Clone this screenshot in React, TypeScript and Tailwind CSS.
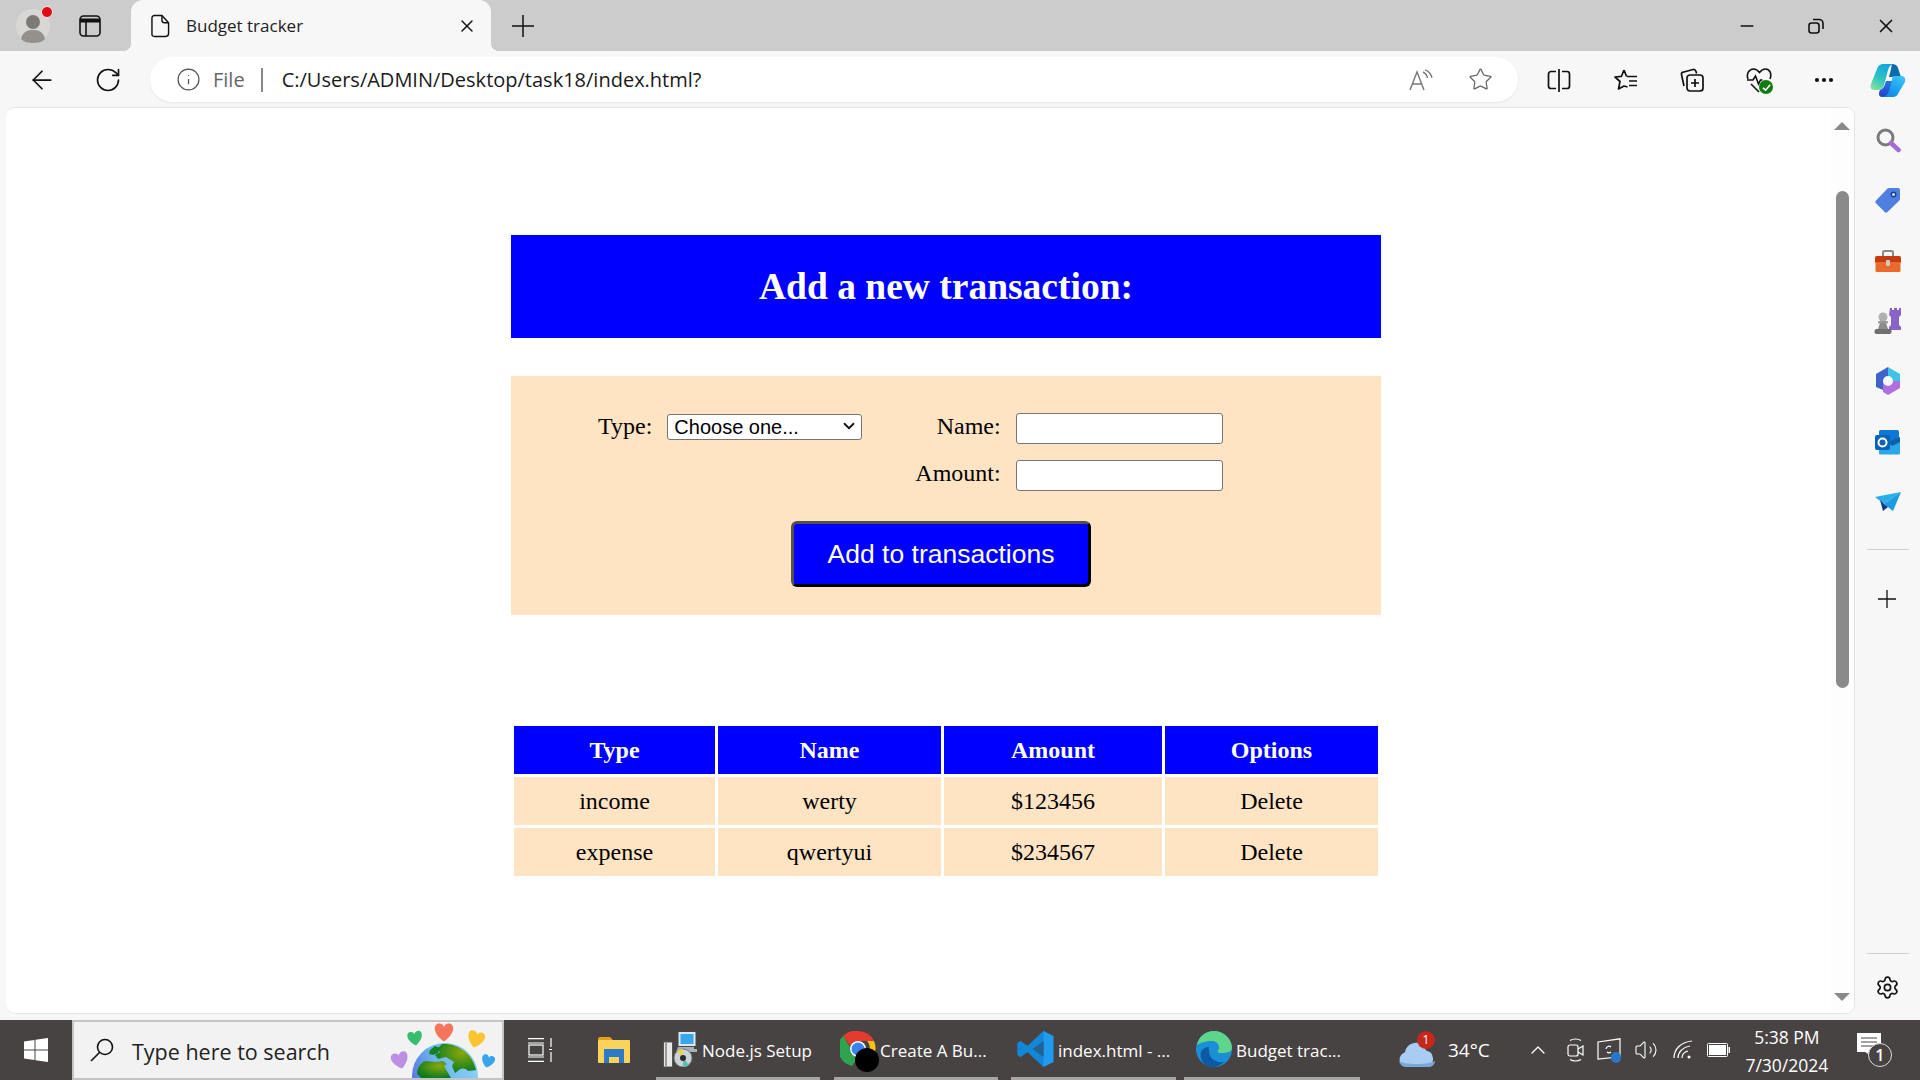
import React from "react";
import { ArrowLeft, RotateCw, Info, Star, X, Minus, Settings, Ellipsis, ChevronUp, ChevronDown, Volume2 } from "lucide-react";

const ui = "font-['Open_Sans',sans-serif]";
const serif = "font-['Liberation_Serif',serif]";
const arial = "font-['Liberation_Sans',sans-serif]";

function Profile() {
  return (
    <div className="relative w-[34px] h-[34px] ml-[16px] rounded-full bg-[#d8d6d2]">
      <svg viewBox="0 0 34 34" className="w-[34px] h-[34px]">
        <circle cx="17" cy="17" r="17" fill="#d9d7d3" />
        <circle cx="17" cy="13" r="7" fill="#7d7a76" />
        <path d="M5 30c2-8 7-9 12-9s10 1 12 9c-3 3-7 4-12 4s-9-1-12-4z" fill="#94918d" />
      </svg>
      <span className="absolute right-[-3px] top-[-3px] w-[12px] h-[12px] rounded-full bg-[#e30613] border border-[#eeeeee]" />
    </div>
  );
}

function TabsIcon() {
  return (
    <svg viewBox="0 0 22 22" className="w-[22px] h-[22px] ml-[29px]" fill="none" stroke="#111" strokeWidth="1.6">
      <rect x="1" y="1" width="20" height="20" rx="3.5" />
      <path d="M1 5.5h20" strokeWidth="4" />
      <path d="M7 6v15" />
    </svg>
  );
}

function DocIcon() {
  return (
    <svg viewBox="0 0 20 24" className="w-[19px] h-[24px]" fill="none" stroke="#111" strokeWidth="1.5">
      <path d="M3.5 1h8l7 7.5V20a3 3 0 0 1-3 3h-12a2.500 2.500 0 0 1-2.500-3V3.500A2.500 2.500 0 0 1 3.500 1z" />
      <path d="M11.500 1v5a2.500 2.500 0 0 0 2.500 2.500h4.500" />
    </svg>
  );
}

function ReadAloud() {
  return (
    <svg viewBox="0 0 24 22" className="w-[24px] h-[22px]" fill="none" stroke="#777" strokeWidth="1.4">
      <path d="M1 21 8 3l7 18M3.500 15h9" />
      <path d="M14 3c2 1 4 3 4.500 6M16 0.800c3 1 6 4 7 8" />
    </svg>
  );
}

function SplitIcon() {
  return (
    <svg viewBox="0 0 24 24" className="w-[24px] h-[24px]" fill="none" stroke="#111" strokeWidth="1.7">
      <path d="M9 3.500H4a2.500 2.500 0 0 0-2.500 2.500v12A2.500 2.500 0 0 0 4 20.500h5M15 3.500h5A2.500 2.500 0 0 1 22.500 6v12a2.500 2.500 0 0 1-2.500 2.500h-5" />
      <path d="M12 1v23" />
    </svg>
  );
}

function FavIcon() {
  return (
    <svg viewBox="0 0 24 24" className="w-[24px] h-[24px]" fill="none" stroke="#111" strokeWidth="1.7">
      <path d="M10 2l2.600 6.500M10 2 7.500 8.300 1 9l5 4.500L4.500 21l5.500-3 3.500 1" strokeLinejoin="round" />
      <path d="M13 8.500h10M15 13h8M15 17.500h8" />
    </svg>
  );
}

function CollectionsIcon() {
  return (
    <svg viewBox="0 0 24 24" className="w-[24px] h-[24px]" fill="none" stroke="#111" strokeWidth="1.7">
      <path d="M4 18 1.500 6.500a2 2 0 0 1 1.500-2.300L13 1.500c1.500-.3 2.500.5 3 2l.6 2" />
      <rect x="7" y="7" width="16" height="16" rx="3" />
      <path d="M15 11v8M11 15h8" />
    </svg>
  );
}

function HealthIcon() {
  return (
    <div className="relative w-[27px] h-[26px]">
      <svg viewBox="0 0 27 26" className="w-[27px] h-[26px]" fill="none" stroke="#111" strokeWidth="1.6">
        <path d="M2 12C0 7 3 2 7.500 2c2.500 0 4.500 1.500 6 3.500C15 3.500 17 2 19.500 2 24 2 26 7 24 12" />
        <path d="M1 13h6l2.500-4 3 8 2-4h2M5 17l8 8" />
      </svg>
      <span className="absolute right-0 bottom-[-1px] w-[14px] h-[14px] rounded-full bg-[#107c10] flex items-center justify-center">
        <svg viewBox="0 0 10 10" className="w-[9px] h-[9px]" fill="none" stroke="#fff" strokeWidth="1.8"><path d="M1 5.500 4 8l5-6" /></svg>
      </span>
    </div>
  );
}

function Copilot() {
  return (
    <svg viewBox="0 0 36 35" className="w-[36px] h-[35px]">
      <defs>
        <linearGradient id="cpA" x1="0.700" y1="0" x2="0.200" y2="1"><stop offset="0" stopColor="#0fa5e0" /><stop offset="0.550" stopColor="#2cc3c0" /><stop offset="1" stopColor="#7fe39a" /></linearGradient>
        <linearGradient id="cpB" x1="0.900" y1="0" x2="0.200" y2="1"><stop offset="0" stopColor="#38c6f7" /><stop offset="1" stopColor="#0d86e6" /></linearGradient>
        <linearGradient id="cpC" x1="0.500" y1="0" x2="0.500" y2="1"><stop offset="0" stopColor="#1f7ae0" /><stop offset="1" stopColor="#2c3fc8" /></linearGradient>
      </defs>
      <path d="M22 1c3 0 5 1 6 4l3 9h-9l-3 0 2-8c.4-2 .6-4 1-5z" fill="#0b6aa8" />
      <path d="M14 1h9c-3 1-4 3-5 6l-4 15c-1 3-3 5-7 5H4c-3 0-4-3-3-6L7 6c1-3 3-5 7-5z" fill="url(#cpA)" />
      <path d="M10 27c3-1 4-3 5-6l1-3h7l-4 16h-7c-3 0-4-3-2-7z" fill="url(#cpC)" />
      <path d="M22 34h-9c3-1 5-3 6-6l4-15h8c3 0 5 2 4 6l-6 10c-1 3-3 5-7 5z" fill="url(#cpB)" />
    </svg>
  );
}

function SideSlot({ children }: { children: React.ReactNode }) {
  return <div className="h-[60.300px] flex items-center justify-center shrink-0">{children}</div>;
}

function Sidebar() {
  return (
    <div className="w-[65px] flex flex-col items-center pt-[3px] pb-[3px] shrink-0">
      <SideSlot>
        <svg viewBox="0 0 26 26" className="w-[26px] h-[26px]" fill="none">
          <circle cx="10.500" cy="10.500" r="7.500" stroke="#7a7a7a" strokeWidth="3" />
          <path d="M16 16l7.500 7" stroke="#a66bd4" strokeWidth="4.500" strokeLinecap="round" />
        </svg>
      </SideSlot>
      <SideSlot>
        <svg viewBox="0 0 26 26" className="w-[26px] h-[26px]">
          <path d="M14 1h9a2 2 0 0 1 2 2v9a2 2 0 0 1-.6 1.500L12.500 25a2 2 0 0 1-2.800 0L1 16.300a2 2 0 0 1 0-2.800L12.500 1.600A2 2 0 0 1 14 1z" fill="#4f80e1" />
          <circle cx="18.500" cy="7.500" r="3" fill="#1e3f8f" />
          <circle cx="18.500" cy="7.500" r="1.500" fill="#cfe0ff" />
        </svg>
      </SideSlot>
      <SideSlot>
        <svg viewBox="0 0 28 24" className="w-[28px] h-[24px]">
          <path d="M9 7V3.500A1.500 1.500 0 0 1 10.500 2h7A1.500 1.500 0 0 1 19 3.500V7" fill="none" stroke="#8a8a8a" strokeWidth="2" />
          <rect x="1" y="7" width="26" height="7" rx="1.500" fill="#c83b0e" />
          <rect x="1.500" y="13" width="25" height="10" rx="1.500" fill="#ea6a2c" />
          <rect x="12" y="11" width="4" height="6" rx="1" fill="#c9c9c9" />
        </svg>
      </SideSlot>
      <SideSlot>
        <svg viewBox="0 0 28 28" className="w-[28px] h-[28px]">
          <path d="M16 1h2v2h2V1h3v2h2V1h2v7l-2 2v8l2 2v3H15v-3l2-2v-8l-2-2z" fill="#8a63c9" />
          <circle cx="9" cy="10" r="4.500" fill="#b0b0b0" />
          <rect x="4" y="14" width="10" height="2.500" rx="1" fill="#9a9a9a" />
          <path d="M6 16h6l2 6H4z" fill="#8c8c8c" />
          <rect x="0.500" y="22" width="17" height="5" rx="2" fill="#6f6f6f" />
        </svg>
      </SideSlot>
      <SideSlot>
        <svg viewBox="0 0 26 28" className="w-[26px] h-[28px]">
          <path d="M13 0 25 7v7h-7a5 5 0 0 0-5-5z" fill="#3fc4e8" />
          <path d="M1 7 13 0v9a5 5 0 0 0-5 5v9l-7-3z" fill="#3f63c9" />
          <path d="M8 14a5 5 0 0 0 5 5 5 5 0 0 0 5-5h7v7l-12 7-5-3z" fill="#b06fe0" />
        </svg>
      </SideSlot>
      <SideSlot>
        <svg viewBox="0 0 26 26" className="w-[26px] h-[26px]">
          <rect x="4" y="1" width="20" height="12" rx="1.500" fill="#0f78d4" />
          <path d="M4 12h21v12a1.500 1.500 0 0 1-1.500 1.500h-18A1.500 1.500 0 0 1 4 24z" fill="#2aa7e8" />
          <path d="M13 13 25 8v5l-8 4z" fill="#0f5fa8" />
          <rect x="0" y="6" width="15" height="15" rx="2" fill="#0a62b8" />
          <circle cx="7.500" cy="13.500" r="4" fill="none" stroke="#fff" strokeWidth="2" />
        </svg>
      </SideSlot>
      <SideSlot>
        <svg viewBox="0 0 26 20" className="w-[26px] h-[20px]">
          <path d="M0 5 26 0 9 12z" fill="#28aee9" />
          <path d="M26 0 18 19l-9-7z" fill="#1c9be0" />
          <path d="M5 8l4 4 4 3-5 4z" fill="#0d3f88" />
        </svg>
      </SideSlot>
      <div className="w-[42px] h-[1px] bg-[#d0d0d0] mt-[17px] mb-[40px] shrink-0" />
      <svg viewBox="0 0 18 18" className="w-[18px] h-[18px] mr-[1px] shrink-0" fill="none" stroke="#111" strokeWidth="1.300"><path d="M9 0v18M0 9h18" /></svg>
      <div className="w-[42px] h-[1px] bg-[#d0d0d0] mt-auto mb-[21px] shrink-0" />
      <Settings className="w-[25px] h-[25px] mb-[17px] shrink-0" strokeWidth={1.600} color="#111" />
    </div>
  );
}

function TransactionPage() {
  const rows = [
    ["income", "werty", "$123456", "Delete"],
    ["expense", "qwertyui", "$234567", "Delete"],
  ];
  return (
    <div className={`flex-1 min-w-0 pl-[505px] pt-[127px] ${serif}`}>
      <div className="w-[870px]">
        <h1 className="h-[103px] pt-[2px] bg-[#0000ff] text-white text-[37.500px] font-bold flex items-center justify-center">Add a new transaction:</h1>
        <form className="mt-[38px] h-[239px] bg-[#ffe4c4] pt-[37px] flex flex-col text-[24px] text-black leading-[27px]">
          <div className="flex pl-[87px]">
            <label className="flex items-start">
              <span>Type:</span>
              <span className="relative ml-[15px] w-[195px] h-[26px] block">
                <select defaultValue="" className={`appearance-none w-[195px] h-[26px] bg-white border border-[#767676] rounded-[3px] text-[20px] pl-[6px] ${arial} leading-[22px]`}>
                  <option value="">Choose one...</option>
                </select>
                <ChevronDown className="absolute right-[4px] top-[4px] w-[18px] h-[18px] pointer-events-none" strokeWidth={2.400} color="#111" />
              </span>
            </label>
            <div className="ml-[53px] grid grid-cols-[auto_207px] gap-x-[15px] gap-y-[16px] justify-items-end">
              <span>Name:</span>
              <input className="w-[207px] h-[31px] bg-white border border-[#767676] rounded-[3px]" />
              <span>Amount:</span>
              <input className="w-[207px] h-[31px] bg-white border border-[#767676] rounded-[3px]" />
            </div>
          </div>
          <button type="button" className={`mt-[30px] ml-[280px] w-[300px] h-[66px] bg-[#0000ff] text-white text-[26.500px] rounded-[6px] border-[3px] border-t-[#55504a] border-l-[#55504a] border-r-black border-b-black ${arial}`}>Add to transactions</button>
        </form>
        <table className="mt-[108px] w-[870px] border-separate border-spacing-[3px] text-[24px] text-black table-fixed">
          <colgroup>
            <col className="w-[201px]" />
            <col className="w-[223px]" />
            <col className="w-[218px]" />
            <col className="w-[213px]" />
          </colgroup>
          <thead>
            <tr>
              {["Type", "Name", "Amount", "Options"].map((h) => (
                <th key={h} className="h-[48px] bg-[#0000ff] text-white font-bold p-0">{h}</th>
              ))}
            </tr>
          </thead>
          <tbody>
            {rows.map((r) => (
              <tr key={r[0]}>
                {r.map((c, i) => (
                  <td key={i} className="h-[48px] bg-[#ffe4c4] text-center p-0">{c}</td>
                ))}
              </tr>
            ))}
          </tbody>
        </table>
      </div>
    </div>
  );
}

const heart = "M0 8C-10 1-9-7-4-7c2 0 3.500 1 4 3 .5-2 2-3 4-3C9-7 10 1 0 8z";

function Earth() {
  return (
    <svg viewBox="2 0 115 56" className="w-[115px] h-[56px]">
      <defs>
        <linearGradient id="ocean" x1="0" y1="0.500" x2="1" y2="0.200"><stop offset="0" stopColor="#5d78e0" /><stop offset="0.400" stopColor="#6bb8f0" /><stop offset="1" stopColor="#8fd0f5" /></linearGradient>
        <radialGradient id="land" cx="0.650" cy="0.300" r="0.700"><stop offset="0" stopColor="#8aa80a" /><stop offset="1" stopColor="#0c7c20" /></radialGradient>
      </defs>
      <circle cx="60" cy="54" r="33" fill="url(#ocean)" />
      <path d="M57 22c16-1 31 10 34 26l-8 1c-3-3-6-3-9-1l-4 3-3-7 2-4-8-5-8 2-3-4 5-3-3-3z" fill="url(#land)" />
      <path d="M38 40c4-2 8 0 12 0l8-1 4 3-3 2 7 12H36l-4-4c0-5 2-9 6-12z" fill="url(#land)" />
      <path d="M50 24l5 2-2 5-5 2-4-1 1-4z" fill="#177f22" />
      <g transform="translate(59 10) scale(1.200)"><path d={heart} fill="#f5745a" /></g>
      <g transform="translate(30 16) rotate(-8) scale(0.950)"><path d={heart} fill="#36bd6f" /></g>
      <g transform="translate(91 17) rotate(15) scale(1.100)"><path d={heart} fill="#fbc431" /></g>
      <g transform="translate(15 38) rotate(-15) scale(1.100)"><path d={heart} fill="#bd8fe3" /></g>
      <g transform="translate(103 39) rotate(15) scale(0.850)"><path d={heart} fill="#38a4ee" /></g>
    </svg>
  );
}

function TaskApp({ icon, label, w, pad, gap }: { icon: React.ReactNode; label: string; w: number; pad: number; gap: number }) {
  return (
    <div className="h-full flex flex-col shrink-0" style={{ width: w }}>
      <div className="flex-1 flex items-center min-h-0" style={{ paddingLeft: pad }}>
        {icon}
        <span className="text-[17px] text-white whitespace-nowrap mt-[4px]" style={{ marginLeft: gap }}>{label}</span>
      </div>
      <div className="h-[3px] bg-[#a8a6a5]" />
    </div>
  );
}

function Taskbar() {
  return (
    <div className={`h-[60px] bg-[#484343] flex shrink-0 items-stretch ${ui}`}>
      <div className="w-[72px] flex items-center justify-center shrink-0">
        <svg viewBox="0 0 24 24" className="w-[24px] h-[24px]" fill="#fff">
          <path d="M0 3.500 10.500 2v9.500H0zM11.500 1.800 24 0v11.500H11.500zM0 12.500h10.500V22L0 20.500zM11.500 12.500H24V24l-12.500-1.800z" />
        </svg>
      </div>
      <div className="w-[432px] bg-[#f2f2f2] border-[2px] border-[#c4c4c4] flex items-center overflow-hidden shrink-0">
        <svg viewBox="0 0 24 24" className="w-[24px] h-[24px] ml-[16px] shrink-0" fill="none" stroke="#111" strokeWidth="1.600">
          <circle cx="15" cy="9" r="7.500" />
          <path d="M9.500 14.500 1 23" />
        </svg>
        <span className="ml-[18px] mt-[5px] text-[21.500px] text-[#222] whitespace-nowrap">Type here to search</span>
        <div className="ml-auto shrink-0 h-[56px]"><Earth /></div>
      </div>
      <div className="ml-[24px] flex items-center shrink-0">
        <svg viewBox="0 0 24 24" className="w-[24px] h-[24px]" fill="none" stroke="#fff" strokeWidth="1.200">
          <path d="M0 .6h16M0 5h16M0 19h16M0 23.400h16" />
          <rect x="1" y="7" width="14" height="10" />
          <path d="M23 0v9M23 14v10M21 11.500h3" />
        </svg>
      </div>
      <div className="ml-[46px] flex items-center shrink-0">
        <svg viewBox="0 0 32 26" className="w-[32px] h-[26px]">
          <path d="M0 2a2 2 0 0 1 2-2h10l3 3H0z" fill="#e0a21b" />
          <rect y="3" width="32" height="23" rx="1" fill="#fbd35a" />
          <path d="M6 12h20v14h-5v-6H11v6H6z" fill="#2a7cc9" />
        </svg>
      </div>
      <div className="ml-[26px] shrink-0">
        <TaskApp w={164} pad={6} gap={5} label="Node.js Setup" icon={
          <svg viewBox="0 0 35 36" className="w-[35px] h-[36px]">
            <rect x="16" y="0.500" width="18" height="15" fill="#dfe7ee" stroke="#3d4a58" />
            <rect x="18.500" y="3" width="13" height="10" fill="#39a6ea" />
            <path d="M16 16h16v2h3v3H14z" fill="#aab0b6" />
            <rect x="1.500" y="11" width="9" height="25" fill="#e8e8e8" stroke="#555" />
            <rect x="3" y="12" width="2" height="23" fill="#9a9a9a" />
            <circle cx="21" cy="27" r="9" fill="#c9d3d8" stroke="#777" />
            <path d="M21 27 15 20a9 9 0 0 1 6-2z" fill="#e9d44a" />
            <path d="M21 27 27 34a9 9 0 0 1-6 2z" fill="#55c0b8" />
            <circle cx="21" cy="27" r="3" fill="#2b2b2b" />
          </svg>
        } />
      </div>
      <div className="ml-[14px] shrink-0">
        <TaskApp w={164} pad={6} gap={3} label="Create A Bu..." icon={
          <div className="relative w-[37px] h-[36px]">
            <svg viewBox="0 0 36 36" className="w-[36px] h-[36px]">
              <path d="M18 0a18 18 0 0 1 16 10H18a8 8 0 0 0-8 5L3 5A18 18 0 0 1 18 0z" fill="#e33b2e" />
              <path d="M34 10a18 18 0 0 1-13 25l7-14a8 8 0 0 0-1-11z" fill="#fbc116" />
              <path d="M3 5l7 11a8 8 0 0 0 8 10l-6 9A18 18 0 0 1 3 5z" fill="#2ea44f" />
              <circle cx="18" cy="18" r="8" fill="#fff" />
              <circle cx="18" cy="18" r="6.500" fill="#3b82f0" />
            </svg>
            <span className="absolute left-[15px] top-[17px] w-[24px] h-[24px] rounded-full bg-black" />
          </div>
        } />
      </div>
      <div className="ml-[13px] shrink-0">
        <TaskApp w={165} pad={6} gap={4} label="index.html - ..." icon={
          <svg viewBox="0 0 36 36" className="w-[37px] h-[36px]">
            <path d="M26 0l10 5v26l-10 5-16-15-7 5-3-2V12l3-2 7 5zM26 10 15 18l11 8z" fill="#1f9cf0" />
            <path d="M26 0 10 15l-7-5-3 2v12l3 2 7-5 16 15z" fill="#0a78c8" opacity="0.600" />
          </svg>
        } />
      </div>
      <div className="ml-[8px] shrink-0">
        <TaskApp w={176} pad={12} gap={4} label="Budget trac..." icon={
          <svg viewBox="0 0 36 36" className="w-[36px] h-[36px]">
            <circle cx="18" cy="18" r="18" fill="#1a8fd6" />
            <path d="M1 14C3 5 10 0 18 0c10 0 18 8 18 17 0 4-5 5-11 5-4 0-4-2-2-4 1-4-2-8-7-8-6 0-12 2-15 4z" fill="#5fd58a" />
            <path d="M13 20c0 7 6 12 15 11-3 3-7 5-11 5-9 0-14-8-12-15 1-3 5-5 8-5-1 1 0 2 0 4z" fill="#0c59a4" />
          </svg>
        } />
      </div>
      <div className="ml-[39px] flex items-center shrink-0">
        <div className="relative w-[36px] h-[28px]">
          <svg viewBox="0 0 36 28" className="w-[36px] h-[28px] mt-[4px]">
            <path d="M8 27a7.500 7.500 0 0 1-2-14.700C7 6 13 2 19 3c4 .7 7 3.500 8 7.500A8.500 8.500 0 0 1 28 27z" fill="#a9cdf2" />
            <path d="M0 21c5 4 30 4 36 0v1a7 7 0 0 1-7 5H7a7 7 0 0 1-7-6z" fill="#7aa8da" />
          </svg>
          <span className="absolute left-[18px] top-[-5px] w-[18px] h-[18px] rounded-full bg-[#c6261c] text-white text-[12px] flex items-center justify-center leading-none">1</span>
        </div>
      </div>
      <span className="ml-[13px] self-center text-[19px] text-white shrink-0">34°C</span>
      <ChevronUp className="ml-[36px] self-center w-[24px] h-[24px] shrink-0" color="#fff" strokeWidth={1.300} />
      <div className="ml-[17px] flex items-center shrink-0">
        <svg viewBox="0 0 17 24" className="w-[17px] h-[24px]" fill="none" stroke="#fff" strokeWidth="1.200">
          <path d="M3 2.500c3-2 8-2 11 0M3 21.500c3 2 8 2 11 0" />
          <rect x="1" y="7" width="10" height="11" rx="2" />
          <path d="m11 11 5-3v9l-5-3" />
        </svg>
      </div>
      <div className="ml-[13px] flex items-center shrink-0">
        <div className="relative w-[24px] h-[24px]">
          <svg viewBox="0 0 24 24" className="w-[24px] h-[24px]" fill="none" stroke="#fff" strokeWidth="1.200">
            <path d="M1 4 23 0.800v18L1 21z" />
            <path d="M9 11a3 3 0 0 1 5-2M14 14a3 3 0 0 1-4 0" />
          </svg>
          <span className="absolute right-0 bottom-[-1px] w-[10px] h-[11px] rounded-full bg-[#2a76c6]" />
        </div>
      </div>
      <div className="ml-[13px] flex items-center shrink-0">
        <Volume2 className="w-[24px] h-[24px]" color="#fff" strokeWidth={1.100} />
      </div>
      <div className="ml-[15px] flex items-center shrink-0">
        <svg viewBox="0 0 20 20" className="w-[20px] h-[20px]" fill="none" stroke="#fff" strokeWidth="1.200">
          <path d="M1 18C1 9 8 2 19 1M5 18c0-6 5-11 12-12M9 18c0-3 2-6 6-7" />
          <circle cx="16" cy="17" r="1.500" fill="#fff" stroke="none" />
        </svg>
      </div>
      <div className="ml-[14px] flex items-center shrink-0">
        <svg viewBox="0 0 23 14" className="w-[23px] h-[14px]" fill="none">
          <rect x="0.500" y="0.500" width="20" height="13" rx="1" stroke="#fff" />
          <rect x="2" y="2" width="17" height="10" fill="#fff" />
          <rect x="21.500" y="4" width="1.500" height="6" fill="#fff" />
        </svg>
      </div>
      <div className="w-[88px] ml-[13px] shrink-0 flex flex-col items-center text-[17.500px] text-white leading-[28px] pt-[3px] whitespace-nowrap">
        <span>5:38 PM</span>
        <span>7/30/2024</span>
      </div>
      <div className="ml-[26px] flex items-center shrink-0">
        <div className="relative w-[26px] h-[34px]">
          <svg viewBox="0 0 24 26" className="w-[24px] h-[26px]">
            <path d="M0 0h24v19H11l5 5-8-5H0z" fill="#fff" />
            <path d="M4 5h16M4 9h16M4 13h12" stroke="#444" strokeWidth="1" />
          </svg>
          <span className="absolute left-[11px] top-[10px] w-[24px] h-[24px] rounded-full border border-[#ddd] bg-[#484343] text-white text-[16px] font-semibold flex items-center justify-center leading-none">1</span>
        </div>
      </div>
    </div>
  );
}

export default function App() {
  return (
    <div className="w-[1920px] h-[1080px] flex flex-col overflow-hidden bg-[#f7f7f7]">
      <div className={`h-[51px] bg-[#cccccc] flex items-center shrink-0 ${ui}`}>
        <Profile />
        <TabsIcon />
        <div className="relative ml-[30px] w-[360px] h-[51px] bg-[#f7f7f7] rounded-t-[12px] flex items-center shrink-0">
          <span className="absolute left-[-8px] bottom-0 w-[8px] h-[8px] bg-[radial-gradient(circle_at_0_0,transparent_8px,#f7f7f7_8px)]" />
          <span className="absolute right-[-8px] bottom-0 w-[8px] h-[8px] bg-[radial-gradient(circle_at_100%_0,transparent_8px,#f7f7f7_8px)]" />
          <div className="ml-[20px]"><DocIcon /></div>
          <span className="ml-[16px] text-[17px] text-[#222] whitespace-nowrap">Budget tracker</span>
          <X className="ml-auto mr-[14px] w-[20px] h-[20px]" strokeWidth={1.700} color="#111" />
        </div>
        <svg viewBox="0 0 22 22" className="w-[22px] h-[22px] ml-[21px]" fill="none" stroke="#111" strokeWidth="1.500"><path d="M11 0v22M0 11h22" /></svg>
        <Minus className="ml-auto w-[20px] h-[20px]" strokeWidth={1.800} color="#111" />
        <svg viewBox="0 0 16 16" className="w-[16px] h-[16px] ml-[51px]" fill="none" stroke="#111" strokeWidth="1.600">
          <rect x="1" y="5" width="10" height="10" rx="2.500" />
          <path d="M5 1.500h6a4 4 0 0 1 4 4V11" />
        </svg>
        <X className="ml-[51px] mr-[23px] w-[22px] h-[22px]" strokeWidth={1.800} color="#111" />
      </div>
      <div className={`h-[56px] flex items-start shrink-0 ${ui}`}>
        <ArrowLeft className="ml-[26px] mt-[14px] w-[32px] h-[30px]" strokeWidth={1.400} color="#111" />
        <RotateCw className="ml-[36px] mt-[15px] w-[28px] h-[28px]" strokeWidth={1.400} color="#111" />
        <div className="ml-[28px] mt-[6px] w-[1368px] h-[45px] bg-white rounded-[22px] flex items-center shadow-[0_1px_2px_rgba(0,0,0,0.08)] shrink-0">
          <Info className="ml-[26px] w-[25px] h-[25px]" strokeWidth={1.200} color="#555" />
          <span className="ml-[12px] text-[20px] text-[#666]">File</span>
          <span className="ml-[16px] w-[2px] h-[24px] bg-[#888]" />
          <span className="ml-[19px] text-[20px] text-[#1a1a1a] whitespace-nowrap">C:/Users/ADMIN/Desktop/task18/index.html?</span>
          <div className="ml-auto flex items-center">
            <ReadAloud />
            <Star className="ml-[35px] mr-[25px] w-[25px] h-[25px]" strokeWidth={1.200} color="#666" />
          </div>
        </div>
        <div className="ml-[29px] mt-[16px] flex items-center">
          <SplitIcon />
          <div className="ml-[43px]"><FavIcon /></div>
          <div className="ml-[42px]"><CollectionsIcon /></div>
          <div className="ml-[42px]"><HealthIcon /></div>
          <Ellipsis className="ml-[39px] w-[24px] h-[24px]" strokeWidth={2.200} color="#111" />
        </div>
        <div className="ml-[34px] mt-[12px]"><Copilot /></div>
      </div>
      <div className="flex-1 min-h-0 flex">
        <div className="ml-[6px] mb-[6px] w-[1849px] bg-white rounded-[9px] border-r border-b border-t border-[#e3e3e3] flex overflow-hidden shrink-0">
          <TransactionPage />
          <div className="w-[23px] bg-[#fdfdfd] flex flex-col items-center shrink-0 pt-[14px] pb-[12px] pr-[1px]">
            <div className="w-0 h-0 border-x-[8px] border-x-transparent border-b-[8px] border-b-[#8a8a8a]" />
            <div className="mt-[61px] w-[13px] h-[497px] bg-[#8a8a8a] rounded-full" />
            <div className="mt-auto w-0 h-0 border-x-[8px] border-x-transparent border-t-[8px] border-t-[#8a8a8a]" />
          </div>
        </div>
        <Sidebar />
      </div>
      <Taskbar />
    </div>
  );
}
